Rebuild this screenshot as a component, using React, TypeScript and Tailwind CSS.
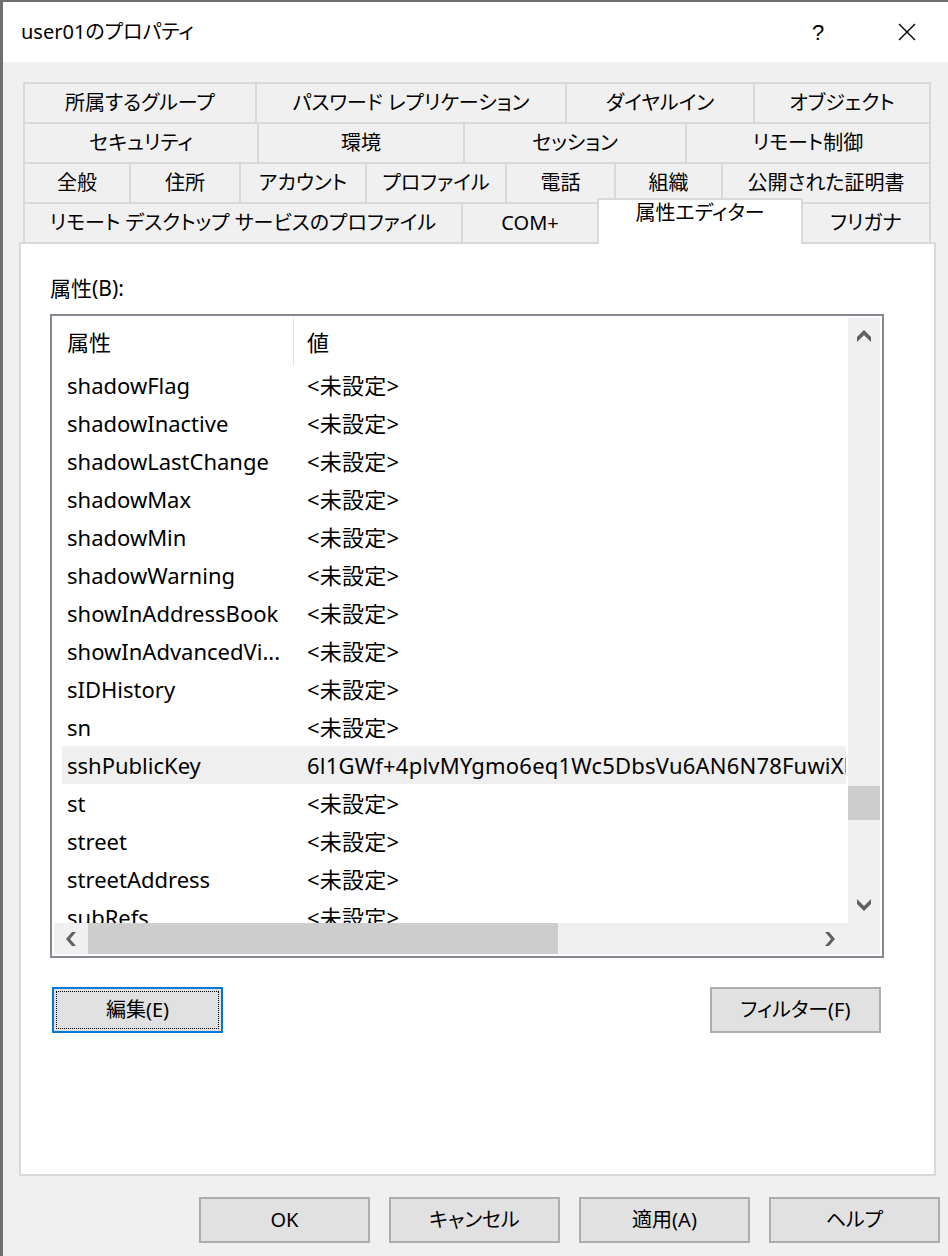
import React from "react";

// ─── Data ─────────────────────────────────────────────────────────────────────

type Tab = { label: string; w: string; selected?: boolean };

const TAB_ROWS: Tab[][] = [
  [
    { label: "所属するグループ", w: "w-[234px]" },
    { label: "パスワード レプリケーション", w: "w-[310px]" },
    { label: "ダイヤルイン", w: "w-[188px]" },
    { label: "オブジェクト", w: "w-[176px]" },
  ],
  [
    { label: "セキュリティ", w: "w-[236px]" },
    { label: "環境", w: "w-[206px]" },
    { label: "セッション", w: "w-[222px]" },
    { label: "リモート制御", w: "w-[244px]" },
  ],
  [
    { label: "全般", w: "w-[108px]" },
    { label: "住所", w: "w-[110px]" },
    { label: "アカウント", w: "w-[126px]" },
    { label: "プロファイル", w: "w-[140px]" },
    { label: "電話", w: "w-[109px]" },
    { label: "組織", w: "w-[107px]" },
    { label: "公開された証明書", w: "w-[208px]" },
  ],
  [
    { label: "リモート デスクトップ サービスのプロファイル", w: "w-[440px]" },
    { label: "COM+", w: "w-[136px]" },
    { label: "属性エディター", w: "w-[206px]", selected: true },
    { label: "フリガナ", w: "w-[128px]" },
  ],
];

const UNSET = "<未設定>";

const ATTRS: { name: string; value: string; hl?: boolean }[] = [
  { name: "shadowFlag", value: UNSET },
  { name: "shadowInactive", value: UNSET },
  { name: "shadowLastChange", value: UNSET },
  { name: "shadowMax", value: UNSET },
  { name: "shadowMin", value: UNSET },
  { name: "shadowWarning", value: UNSET },
  { name: "showInAddressBook", value: UNSET },
  { name: "showInAdvancedVi...", value: UNSET },
  { name: "sIDHistory", value: UNSET },
  { name: "sn", value: UNSET },
  { name: "sshPublicKey", value: "6l1GWf+4plvMYgmo6eq1Wc5DbsVu6AN6N78FuwiXk2", hl: true },
  { name: "st", value: UNSET },
  { name: "street", value: UNSET },
  { name: "streetAddress", value: UNSET },
  { name: "subRefs", value: UNSET },
];

// ─── Small pieces ─────────────────────────────────────────────────────────────

function ArrowV({ down }: { down?: boolean }) {
  return (
    <svg width="14" height="12" viewBox="0 0 14 12" className={down ? "rotate-180" : ""}>
      <polygon points="7,0 14,7 14,12 7,5 0,12 0,7" fill="#606060" />
    </svg>
  );
}

function ArrowH({ right }: { right?: boolean }) {
  return (
    <svg width="10" height="14" viewBox="0 0 10 14" className={right ? "rotate-180" : ""}>
      <polygon points="0,7 6,0 10,0 4,7 10,14 6,14" fill="#606060" />
    </svg>
  );
}

function DlgButton({ children, focused }: { children: React.ReactNode; focused?: boolean }) {
  return (
    <button
      className={[
        "relative h-[46px] w-[171px] bg-[#e1e1e1] text-[20px] text-black flex items-center justify-center [font-feature-settings:'palt']",
        focused ? "border-2 border-[#0078d7]" : "border-2 border-[#adadad]",
      ].join(" ")}
    >
      {focused && <span className="absolute inset-[2px] border border-dotted border-black" />}
      {children}
    </button>
  );
}

// ─── Component ────────────────────────────────────────────────────────────────

export default function App() {
  return (
    <div className="w-[948px] h-[1256px] overflow-hidden bg-[#f0f0f0] border-l-[3px] border-t-2 border-[#6f6f6f] font-['Noto_Sans','Noto_Sans_CJK_JP',sans-serif] text-black">
      {/* ── Title bar ── */}
      <div className="h-[60px] bg-white flex items-center pl-[18px] pr-[18px]">
        <span className="text-[20px] [font-feature-settings:'palt']">user01のプロパティ</span>
        <span className="ml-auto w-[40px] text-center text-[22px] font-light font-['Liberation_Sans',sans-serif]">?</span>
        <span className="w-[46px] ml-[46px] flex items-center justify-center">
          <svg width="18" height="18" viewBox="0 0 18 18">
            <path d="M1 1L17 17M17 1L1 17" stroke="#000" strokeWidth="1.4" />
          </svg>
        </span>
      </div>

      {/* ── Tabs ── */}
      <div className="ml-[20px] mt-[20px] w-[908px] [font-feature-settings:'palt']">
        {TAB_ROWS.map((row, ri) => (
          <div key={ri} className="flex h-[40px]">
            {row.map((t, i) =>
              t.selected ? (
                <div
                  key={t.label}
                  className={`${t.w} relative z-10 -ml-[2px] -mt-[4px] h-[46px] self-start bg-white border-x-2 border-t-2 border-[#d9d9d9] flex justify-center text-[20px] leading-[26px]`}
                >
                  {t.label}
                </div>
              ) : (
                <div
                  key={t.label}
                  className={[
                    t.w,
                    "flex items-center justify-center border-t-2 border-r-2 border-[#d9d9d9] text-[20px] whitespace-nowrap",
                    i === 0 ? "border-l-2" : "",
                  ].join(" ")}
                >
                  {t.label}
                </div>
              )
            )}
          </div>
        ))}
      </div>

      {/* ── Panel ── */}
      <div className="ml-[16px] w-[917px] h-[934px] bg-white border-2 border-[#d9d9d9] pl-[29px]">
        <div className="mt-[30px] text-[21px] leading-[28px]">属性(B):</div>

        {/* List box */}
        <div className="mt-[12px] w-[834px] h-[644px] border-2 border-[#828790] p-[2px] grid grid-cols-[794px_32px] grid-rows-[605px_31px]">
          <div className="overflow-hidden pl-[8px]">
            {/* Header */}
            <div className="flex h-[48px] text-[22px]">
              <div className="w-[231px] pl-[5px] flex items-center">属性</div>
              <div className="w-px bg-[#e5e5e5]" />
              <div className="pl-[13px] flex items-center">値</div>
            </div>
            {/* Rows */}
            {ATTRS.map((a) => (
              <div
                key={a.name}
                className={[
                  "flex h-[38px] w-[784px] items-center text-[22px] whitespace-nowrap overflow-hidden",
                  a.hl ? "bg-[#efefef]" : "",
                ].join(" ")}
              >
                <div className="w-[231px] shrink-0 pl-[5px] overflow-hidden">{a.name}</div>
                <div className="pl-[14px] overflow-hidden tracking-[0.2px]">{a.value}</div>
              </div>
            ))}
          </div>

          {/* Vertical scrollbar */}
          <div className="bg-[#f0f0f0] flex flex-col">
            <div className="h-[36px] flex items-center justify-center">
              <ArrowV />
            </div>
            <div className="h-[432px]" />
            <div className="h-[34px] bg-[#cdcdcd]" />
            <div className="flex-1" />
            <div className="h-[36px] flex items-center justify-center">
              <ArrowV down />
            </div>
          </div>

          {/* Horizontal scrollbar */}
          <div className="bg-[#f0f0f0] flex">
            <div className="w-[34px] flex items-center justify-center">
              <ArrowH />
            </div>
            <div className="w-[470px] bg-[#cdcdcd]" />
            <div className="flex-1" />
            <div className="w-[36px] flex items-center justify-center">
              <ArrowH right />
            </div>
          </div>
          <div className="bg-[#f0f0f0]" />
        </div>

        {/* Edit / Filter */}
        <div className="mt-[29px] ml-[2px] w-[829px] flex justify-between">
          <DlgButton focused>編集(E)</DlgButton>
          <DlgButton>フィルター(F)</DlgButton>
        </div>
      </div>

      {/* ── Bottom buttons ── */}
      <div className="mt-[21px] flex justify-end gap-[19px] pr-[8px]">
        <DlgButton>OK</DlgButton>
        <DlgButton>キャンセル</DlgButton>
        <DlgButton>適用(A)</DlgButton>
        <DlgButton>ヘルプ</DlgButton>
      </div>
    </div>
  );
}
